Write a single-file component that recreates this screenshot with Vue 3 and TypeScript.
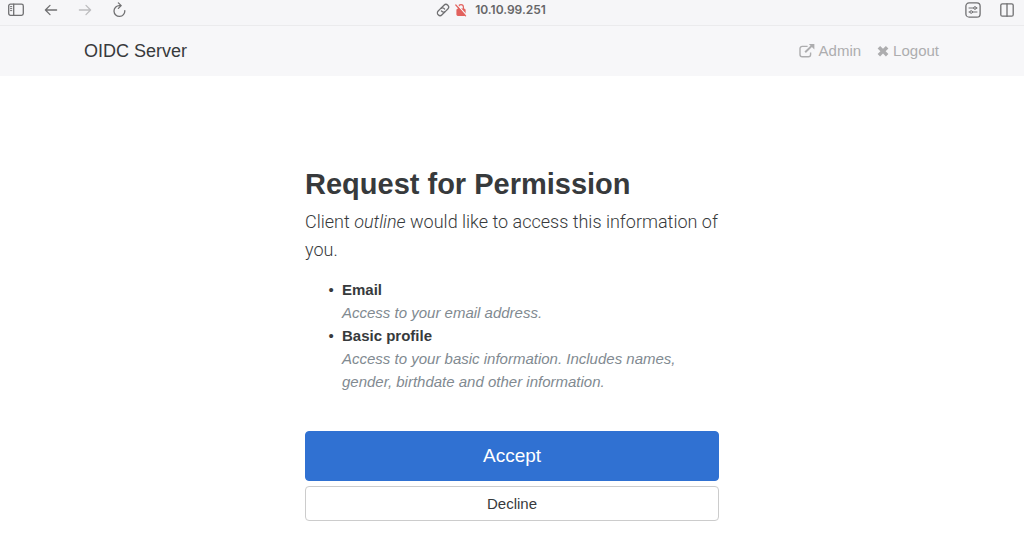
<script setup lang="ts">
interface Scope {
  name: string
  description: string
}

const host = '10.10.99.251'
const client = 'outline'
const scopes: Scope[] = [
  { name: 'Email', description: 'Access to your email address.' },
  {
    name: 'Basic profile',
    description: 'Access to your basic information. Includes names, gender, birthdate and other information.',
  },
]
</script>

<template>
  <div class="window">
    <div class="toolbar">
      <div class="tools tools-left">
        <button type="button" aria-label="Sidebar">
          <svg width="16" height="14" viewBox="0 0 16 14">
            <rect x="0.7" y="1.2" width="14.6" height="11.2" rx="1.8" />
            <path d="M5.7 1.2v11.2" />
            <path class="fine" d="M2.5 3.6h1.3M2.5 5.6h1.3M2.5 7.6h1.3" />
          </svg>
        </button>
        <button type="button" aria-label="Back">
          <svg width="14" height="14" viewBox="0 0 14 14"><path d="M12.6 7H1.4M6 2.4L1.4 7L6 11.6" /></svg>
        </button>
        <button type="button" class="faded" aria-label="Forward">
          <svg width="14" height="14" viewBox="0 0 14 14"><path d="M1.4 7h11.2M8 2.4L12.6 7L8 11.6" /></svg>
        </button>
        <button type="button" aria-label="Reload">
          <svg width="14" height="16" viewBox="0 0 14 16">
            <path d="M12.8 8.6A5.4 5.4 0 1 1 7.4 3.6H8.6M6.4 0.9L9.2 3.6L6.4 6.4" />
          </svg>
        </button>
      </div>
      <div class="address">
        <svg width="14" height="14" viewBox="0 0 14 14" aria-hidden="true">
          <g transform="rotate(-45 7 7)">
            <path d="M6.8 9.7H2.9a2.7 2.7 0 0 1 0-5.4h3.3a2.7 2.7 0 0 1 2.6 3.2" />
            <path d="M7.2 4.3h3.9a2.7 2.7 0 0 1 0 5.4H7.8a2.7 2.7 0 0 1-2.6-3.2" />
          </g>
        </svg>
        <svg class="insecure" width="12" height="14" viewBox="0 0 12 14" aria-hidden="true">
          <rect class="lock" x="2" y="6" width="8" height="6.4" rx="1" />
          <path d="M3.6 6V4a2.4 2.4 0 0 1 4.8 0v2" />
          <path class="gap" d="M1.8 1.4l9.6 10.6" />
          <path d="M0.8 2l9.8 10.8" />
        </svg>
        <span>{{ host }}</span>
      </div>
      <div class="tools tools-right">
        <button type="button" aria-label="Page settings">
          <svg width="16" height="16" viewBox="0 0 16 16">
            <rect x="0.9" y="0.9" width="14.2" height="14.2" rx="3.2" />
            <g class="fine">
              <path d="M4 6h4.6M11.4 6H12M4 10h.8M7.6 10H12" />
              <circle cx="10" cy="6" r="1.3" />
              <circle cx="6.2" cy="10" r="1.3" />
            </g>
          </svg>
        </button>
        <button type="button" aria-label="Split view">
          <svg width="14" height="14" viewBox="0 0 14 14">
            <rect x="0.8" y="0.8" width="12.4" height="12.4" rx="1.5" />
            <path d="M7 0.8v12.4" />
          </svg>
        </button>
      </div>
    </div>

    <header class="navbar">
      <nav class="container">
        <a class="brand" href="#">OIDC Server</a>
        <div class="links">
          <a href="#admin">
            <svg width="16" height="14" viewBox="0 0 16 14" aria-hidden="true">
              <path class="line" d="M8.6 2.4H3.2A2.2 2.2 0 0 0 1 4.6v6A2.2 2.2 0 0 0 3.2 12.8h6.2a2.2 2.2 0 0 0 2.2-2.2V8.4" />
              <path class="line thick" d="M6.2 8.2L13 1.6" />
              <path d="M9.8 0H15.4V5.6Z" />
            </svg>
            Admin
          </a>
          <a href="#logout">
            <svg width="12" height="12" viewBox="0 0 12 12" aria-hidden="true">
              <path d="M3.1.9L6 3.8L8.9.9L11.4 3.4L8.6 6.2L11.4 9L8.9 11.5L6 8.6L3.1 11.5L.6 9L3.4 6.2L.6 3.4Z" />
            </svg>
            Logout
          </a>
        </div>
      </nav>
    </header>

    <main class="consent">
      <h1>Request for Permission</h1>
      <p class="lead">Client <em>{{ client }}</em> would like to access this information of you.</p>
      <ul>
        <li v-for="scope in scopes" :key="scope.name">
          <strong>{{ scope.name }}</strong>
          <p>{{ scope.description }}</p>
        </li>
      </ul>
      <form class="actions" @submit.prevent>
        <button type="submit" class="accept">Accept</button>
        <button type="button" class="decline">Decline</button>
      </form>
    </main>
  </div>
</template>

<style>
body {
  margin: 0;
  background: #fff;
}
</style>

<style scoped>
.window {
  font-family: "Liberation Sans", Arial, sans-serif;
  font-size: 15px;
  line-height: 23px;
  color: #373a3c;
}

button {
  font: inherit;
  cursor: pointer;
}

.toolbar {
  display: grid;
  grid-template-columns: 1fr auto 1fr;
  align-items: center;
  height: 26px;
  padding: 0 10px 5px 8px;
  box-sizing: border-box;
  background: #f6f6f8;
  border-bottom: 1px solid #ebebed;
}

.toolbar svg {
  display: block;
  fill: none;
  stroke: #707072;
  stroke-width: 1.3;
  stroke-linecap: round;
  stroke-linejoin: round;
}

.toolbar .fine {
  stroke-width: 1;
}

.tools {
  display: flex;
  align-items: center;
}

.tools button {
  padding: 0;
  border: 0;
  background: none;
}

.tools-left {
  gap: 20px;
}

.tools-right {
  justify-content: flex-end;
  gap: 19px;
}

.toolbar .faded svg {
  stroke: #bdbdbf;
}

.address {
  display: flex;
  align-items: center;
  gap: 5px;
  margin-right: 40px;
  font: 600 12px/20px Inter, "Liberation Sans", sans-serif;
  color: #666668;
}

.address span {
  margin-left: 3px;
}

.toolbar .insecure {
  stroke: #e2625e;
  stroke-width: 1.2;
}

.insecure .lock {
  fill: #e2625e;
}

.toolbar .insecure .gap {
  stroke: #f6f6f8;
}

.navbar {
  background: #f7f7f9;
}

.container {
  display: flex;
  align-items: center;
  justify-content: space-between;
  max-width: 856px;
  height: 50px;
  margin: 0 auto;
}

.brand {
  font-size: 18px;
  color: #373a3c;
  text-decoration: none;
}

.links {
  display: flex;
  gap: 16px;
  padding-right: 1px;
  line-height: 24px;
}

.links a {
  display: flex;
  align-items: center;
  gap: 4px;
  color: #adadaf;
  text-decoration: none;
}

.links svg {
  fill: #adadaf;
}

.links .line {
  fill: none;
  stroke: #adadaf;
  stroke-width: 1.4;
}

.links .thick {
  stroke-width: 2;
}

.consent {
  max-width: 414px;
  margin: 0 auto;
  padding: 91px 16px 32px;
}

h1 {
  margin: 0 0 7px;
  font-size: 29px;
  line-height: 34px;
  font-weight: 700;
}

.lead {
  margin: 0 0 14px;
  font-family: Roboto, "Liberation Sans", sans-serif;
  font-size: 18px;
  line-height: 28px;
  font-weight: 300;
}

ul {
  margin: 0 0 38px;
  padding-left: 37px;
  list-style-type: "•\00a0\00a0";
}

li p {
  margin: 0;
  font-style: italic;
  color: #818a91;
}

.actions {
  display: grid;
  gap: 5px;
}

.actions button {
  border-radius: 4px;
}

.actions .accept {
  padding: 12px;
  border: 1px solid #3071d2;
  background: #3071d2;
  color: #fff;
  font-size: 19px;
  line-height: 24px;
}

.decline {
  padding: 5px;
  border: 1px solid #ccc;
  background: #fff;
  color: #373a3c;
}
</style>
